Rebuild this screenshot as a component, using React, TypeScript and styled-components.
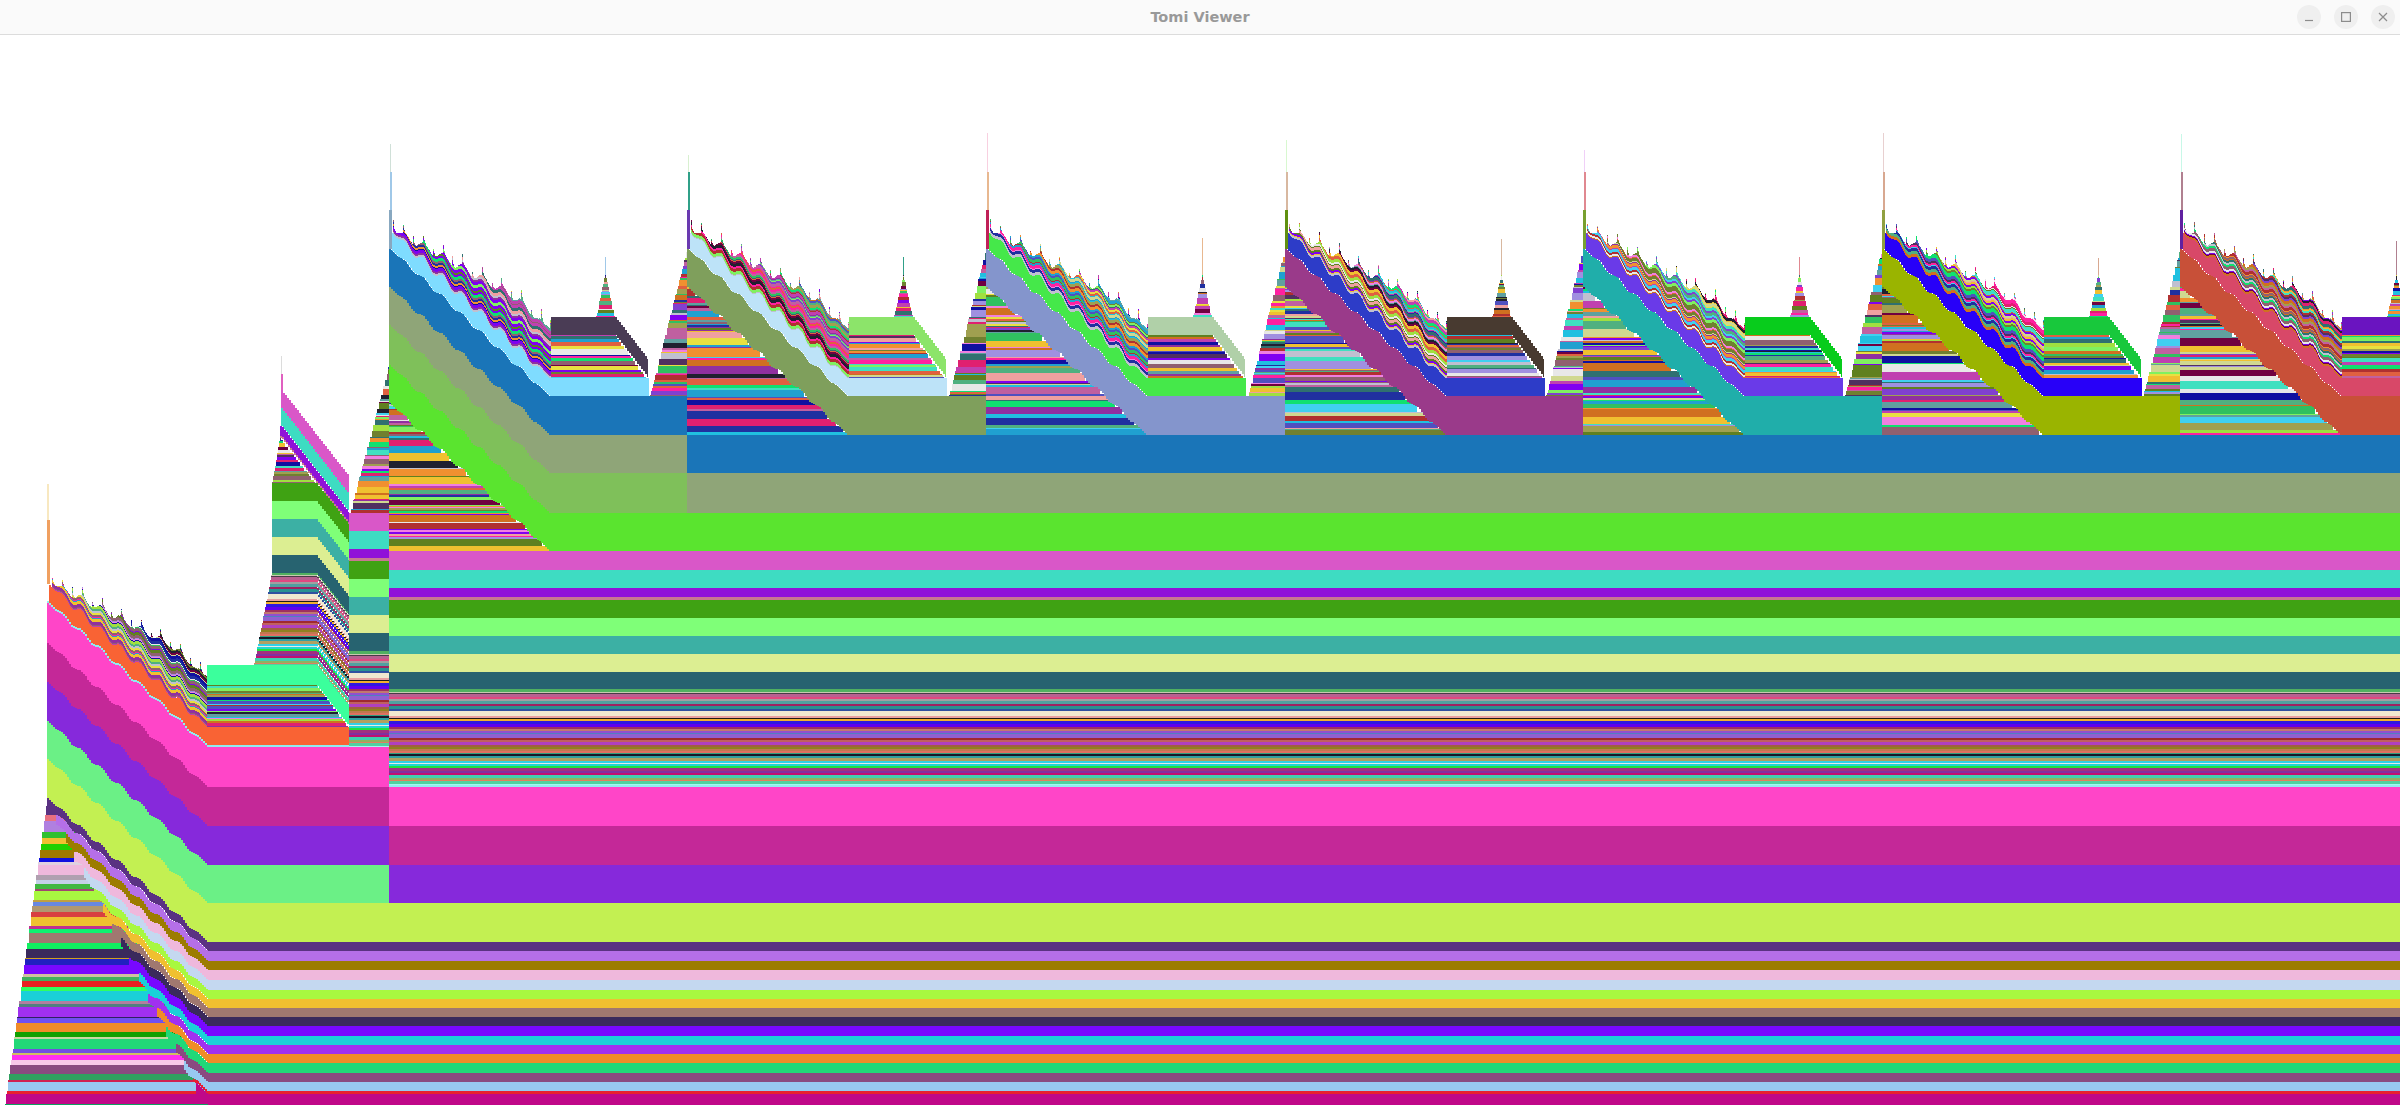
import React from 'react';
import styled, { createGlobalStyle } from 'styled-components';

const GlobalStyle = createGlobalStyle`
  html, body, #root { margin: 0; padding: 0; height: 100%; background: #fff; }
`;

const Window = styled.div`
  display: flex;
  flex-direction: column;
  height: 100vh;
  overflow: hidden;
`;

const TitleBar = styled.header`
  flex: 0 0 34px;
  display: flex;
  align-items: center;
  justify-content: flex-end;
  position: relative;
  padding-right: 5px;
  background: #fafafa;
  border-bottom: 1px solid #dcdcdc;
`;

const Title = styled.h1`
  position: absolute;
  left: 0;
  right: 0;
  margin: 0;
  text-align: center;
  font: bold 14.5px 'DejaVu Sans', sans-serif;
  color: #999;
`;

const WindowButtons = styled.div`
  display: flex;
  gap: 13px;
`;

const WindowButton = styled.button`
  width: 24px;
  height: 24px;
  padding: 0;
  border: 0;
  border-radius: 50%;
  background: #efefef;
  display: flex;
  align-items: center;
  justify-content: center;
  svg { display: block; stroke: #8c8c8c; stroke-width: 1.2; fill: none; }
`;

const ChartArea = styled.main`
  flex: 1;
  min-height: 0;
`;

const Chart = styled.svg`
  display: block;
  width: 100%;
  height: 100%;
  shape-rendering: crispEdges;
`;

type Op = { d: string; fill: string };
type Row = [string, number];

const VIVID = [
  '#e02070', '#30c060', '#8040d0', '#f0c030', '#20a0d0', '#a0e040', '#503060', '#e06040',
  '#40e0c0', '#c040b0', '#708030', '#2030a0', '#f080e0', '#10e070', '#906070', '#c0c0d0',
  '#d07020', '#60a0a0', '#700040', '#80f060', '#e8e040', '#5050c0', '#202030', '#a090e0',
  '#20c0e0', '#b03030', '#50b080', '#f0a0a0', '#9030a0', '#d0d890', '#1010a0', '#ff20a0',
  '#608020', '#40d0f0', '#e8e8e8', '#a0a050', '#c060a0', '#307070', '#8000f0', '#f09030',
];

const MID: Row[] = [
  ['#50b060', 3], ['#c8c8b0', 1], ['#483c48', 1], ['#b86090', 3], ['#e04880', 2], ['#a0a0a0', 2],
  ['#50a0a0', 3], ['#a02060', 2], ['#2a9090', 3], ['#3050a0', 2], ['#f0e8d0', 5], ['#e8a0a0', 2],
  ['#1a1a1a', 1], ['#f0b030', 2], ['#3018e0', 3], ['#6000f0', 3], ['#a03060', 2], ['#c07870', 2],
  ['#9050d0', 2], ['#5080c0', 1], ['#9060d0', 4], ['#a02830', 2], ['#c06060', 2], ['#b040c0', 3],
  ['#a06040', 2], ['#908020', 2], ['#c07850', 2], ['#e07060', 2], ['#30a080', 1], ['#181828', 2],
  ['#30a0a0', 2], ['#b0a060', 3], ['#30d0e8', 2], ['#e8e8e8', 1], ['#20d8d0', 2], ['#20e040', 2],
  ['#a03080', 3], ['#8030a0', 2], ['#c01070', 2], ['#40d0b0', 3], ['#90b060', 2], ['#e08060', 1],
  ['#50d0a0', 3], ['#a0f8f0', 1],
];

const LOW_TRIANGLE: [number, number, string][] = [
  [798, 806, '#e070a0'], [806, 815, '#5a3282'], [815, 821, '#e87080'], [821, 832, '#b080e0'],
  [832, 838, '#30c030'], [838, 844, '#f0c030'], [844, 850, '#20d000'], [850, 858, '#a07800'],
  [858, 862, '#1010e0'], [862, 865, '#e0d0e0'], [865, 875, '#efb8dc'], [875, 880, '#b0a0b0'],
  [880, 884, '#c4d0e8'], [884, 889, '#40b840'], [889, 891, '#a04870'], [891, 900, '#a8f840'],
  [900, 902, '#c0a040'], [902, 906, '#6888e0'], [906, 912, '#b09870'], [912, 917, '#d84040'],
  [917, 926, '#f0c030'], [926, 929, '#c03090'], [929, 933, '#10f070'], [933, 943, '#a07870'],
  [943, 949, '#10f060'], [949, 958, '#3a2a5c'], [958, 959, '#d0a020'], [959, 965, '#2020c0'],
  [965, 974, '#7808ff'], [974, 977, '#d0c0a0'], [977, 981, '#40b060'], [981, 987, '#e82020'],
  [987, 991, '#30ff60'], [991, 1001, '#1ad0d8'], [1001, 1004, '#b080a0'], [1004, 1007, '#508080'],
  [1007, 1017, '#a030f0'], [1017, 1018, '#302060'], [1018, 1023, '#7050f0'], [1023, 1032, '#f08c28'],
  [1032, 1037, '#10a000'], [1037, 1039, '#c8d8a0'], [1039, 1049, '#22d878'], [1049, 1053, '#7050e0'],
  [1053, 1055, '#d0c060'], [1055, 1060, '#ff30f0'], [1060, 1065, '#f8c8e8'], [1065, 1074, '#8a4a80'],
  [1074, 1080, '#30a060'], [1080, 1082, '#d02050'], [1082, 1091, '#98c8f0'], [1091, 1094, '#e82030'],
  [1094, 1104, '#c00888'], [1104, 1105, '#10a060'],
];

const LOW_STACK: Row[] = [
  ['#5a3282', 9], ['#b56fe8', 10], ['#9c7c00', 9], ['#efb8dc', 10], ['#c4d8f0', 10], ['#a8f840', 9],
  ['#f0c030', 9], ['#a07870', 9], ['#3a2a5c', 9], ['#7808ff', 10], ['#1ad0d8', 9], ['#a030f0', 9],
  ['#f08c28', 9], ['#22d878', 10], ['#8a4a80', 9], ['#98c8f0', 9], ['#e82030', 3], ['#c00888', 11],
];

const UNITS = [
  { x0: 389, top: 144, spikeTop: 257, a: '#7fdcff', b: '#1a75b8', box: '#4a3c55', wide: '#88a8c0', mid: '#a0c8e8', pale: '#d0e0d8' },
  { x0: 687, top: 155, spikeTop: 257, a: '#bde3f8', b: '#7f9f5c', box: '#8ce46a', wide: '#6a3ab0', mid: '#30a088', pale: '#d8f0d0' },
  { x0: 986, top: 133, spikeTop: 238, a: '#45e84a', b: '#8495cc', box: '#b0d0a8', wide: '#c02058', mid: '#e8b890', pale: '#f8d0e0' },
  { x0: 1285, top: 140, spikeTop: 239, a: '#2d3cc8', b: '#9a3a8a', box: '#483a30', wide: '#609010', mid: '#d8b8a0', pale: '#d8f8d0' },
  { x0: 1583, top: 150, spikeTop: 257, a: '#6a3ae8', b: '#20aeaa', box: '#08cc1c', wide: '#78a030', mid: '#e08890', pale: '#f0d0f8' },
  { x0: 1882, top: 133, spikeTop: 258, a: '#2800f8', b: '#9ab400', box: '#18c83c', wide: '#90a040', mid: '#d8a890', pale: '#e8d0d0' },
  { x0: 2180, top: 134, spikeTop: 241, a: '#d84868', b: '#c85038', box: '#6a14c0', wide: '#6020a0', mid: '#b08090', pale: '#c8f8e8' },
];

const rng = (seed: number) => () => {
  seed = (seed * 1664525 + 1013904223) >>> 0;
  return seed / 4294967296;
};

const ops: Op[] = [];

const bar = (fill: string, y: number, h: number, x1: number, x2: number) => {
  const l = Math.round(x1);
  const r = Math.round(x2);
  if (r > l) ops.push({ fill, d: `M${l} ${y}H${r}V${y + h}H${l}Z` });
};

const stairY = (x: number, yFinal: number, a: number, b: number, shift: number, amp: number) => {
  const t = Math.max(0, Math.min(1, (x - a) / (b - a)));
  const fade = Math.min(1, t * 8, (1 - t) * 8);
  return Math.round(yFinal - shift * (1 - t) + amp * fade * Math.sin((2 * Math.PI * (x - a)) / 19.6));
};

const band = (
  fill: string, yFinal: number, h: number, a: number, b: number, shift: number,
  xs: number, xe: number, amp = 2, ampTop = amp,
) => {
  let top = '';
  let bottom = '';
  for (let x = xs; x < xe; x += 2) {
    const nx = Math.min(x + 2, xe);
    const yt = stairY(x, yFinal, a, b, shift, ampTop);
    const yb = stairY(x, yFinal, a, b, shift, amp) + h;
    top += `${top ? 'L' : 'M'}${x} ${yt}L${nx} ${yt}`;
    bottom = `L${nx} ${yb}L${x} ${yb}` + bottom;
  }
  ops.push({ fill, d: `${top}${bottom}Z` });
};

const stack = (rows: Row[], y0: number, draw: (fill: string, y: number, h: number) => void) => {
  let y = y0;
  for (const [fill, h] of rows) {
    draw(fill, y, h);
    y += h;
  }
};

const stripes = (
  seed: number, y0: number, y1: number,
  left: (y: number) => number, right: (y: number) => number, maxH = 7,
) => {
  const r = rng(seed);
  let y = y0;
  while (y < y1) {
    const big = r() > 0.55;
    const h = Math.min(y1 - y, big ? 3 + Math.floor(r() * (maxH - 2)) : 1 + Math.floor(r() * 2));
    bar(VIVID[Math.floor(r() * VIVID.length)], y, h, left(y), right(y));
    y += h;
  }
};

// sawtooth heap of thin slices sitting on the light band of each wave
const sawHeap = (seed: number, x0: number, x1: number, bandTop: (x: number) => number) => {
  const r = rng(seed);
  const layers: string[] = [];
  for (let i = 0; i < 90; i++) {
    const c = VIVID[Math.floor(r() * VIVID.length)];
    const n = 1 + Math.floor(r() * 3);
    for (let k = 0; k < n; k++) layers.push(c);
  }
  const paths = new Map<string, string>();
  for (let x = x0; x < x1; x++) {
    const t = (x - x0) / (x1 - x0);
    const phase = (x - x0) % 9.8;
    const spike = phase < 1 ? 6 + r() * 5 : phase < 2 ? 3 : phase < 3 ? 1 : 0;
    const group = ((x - x0) % 19.6) / 19.6;
    const height = Math.round(Math.min(50, 4 + 60 * t) * (0.95 + 0.05 * group) + spike);
    const base = bandTop(x);
    for (let d = 0; d < height; d++) {
      const c = layers[d % layers.length];
      paths.set(c, (paths.get(c) || '') + `M${x} ${base - d - 1}h1v1h-1Z`);
    }
  }
  paths.forEach((d, fill) => ops.push({ fill, d }));
};

const buildChart = () => {
  // first, lower wave: left triangle and the long rows under it
  const lowLeft = (y: number) => 47 - (y - 798) * 0.137;
  for (const [y0, y1, c] of LOW_TRIANGLE) {
    bar(c, y0, y1 - y0, lowLeft(y0), 47 + ((y0 - 798) / 307) * 160 + 14);
  }
  stack(LOW_STACK, 942, (fill, y, h) => {
    const start = Math.round(47 + ((y - 942) / 163) * 160);
    band(fill, y, h, 47, 207, 144, start, 2400);
  });

  // left spine
  bar('#f8e8c0', 484, 36, 47, 49);
  bar('#f0a060', 520, 64, 47, 50);

  const low = (fill: string, y: number, h: number, xe: number) => band(fill, y, h, 47, 207, 144, 47, xe);
  low('#c3f052', 903, 39, 2400);
  low('#6bf086', 865, 38, 389);
  low('#8629db', 826, 39, 389);
  low('#c42898', 787, 39, 389);
  low('#ff45c8', 747, 40, 389);
  low('#90ecf0', 745, 2, 389);
  band('#f96334', 727, 18, 47, 207, 144, 49, 349, 2, 3.5);
  sawHeap(11, 52, 207, (x) => stairY(x, 727, 47, 207, 144, 3.5));

  // mint box tower between the first and second wave
  stripes(23, 683, 727, () => 207, (y) => 316 + ((y - 683) / 44) * 33, 3);
  band('#3bff9c', 707, 20, 316, 349, 42, 207, 349, 0);
  bar('#f96334', 727, 18, 207, 349);

  const towerLeft = (y: number) => 272 - ((y - 572) * 18) / 93;
  stack(MID, 572, (fill, y, h) => {
    band(fill, y + 42, h, 316, 349, 42, Math.round(towerLeft(y)), 349, 0);
  });
  let rowY = 483;
  for (const c of ['#3fa213', '#7fff78', '#3cb0a4', '#dcee92', '#276370']) {
    band(c, rowY + 42, 18, 316, 349, 42, 272, 349, 0);
    rowY += 18;
  }
  band('#3bff9c', 707, 20, 316, 349, 42, 207, 349, 0);
  stripes(37, 438, 483, (y) => 280 - ((y - 438) * 8) / 45, (y) => 281 + (y - 438) / 1.28, 4);
  band('#d957c8', 477, 18, 281, 349, 87, 281, 349, 0);
  band('#3edcc2', 495, 18, 281, 349, 87, 281, 349, 0);
  band('#9012d8', 513, 10, 281, 349, 87, 280, 349, 0);
  band('#c87890', 523, 2, 281, 349, 87, 280, 349, 0);
  bar('#dcdcdc', 356, 18, 281, 282);
  bar('#e060c0', 374, 16, 281, 283);

  // column right before the big repeat
  stripes(41, 365, 513, (y) => 389 - ((y - 365) * 39) / 148, () => 390, 6);
  const MAIN: Row[] = [
    ['#d957c8', 18], ['#3edcc2', 18], ['#9012d8', 9], ['#c87890', 3], ['#3fa213', 18],
    ['#7fff78', 18], ['#3cb0a4', 18], ['#dcee92', 18], ['#276370', 18],
  ];
  stack(MAIN, 513, (fill, y, h) => bar(fill, y, h, 349, 389));
  stack(MID, 651, (fill, y, h) => bar(fill, y, h, 349, 389));

  // rows running under all the waves
  const MAIN_LONG: Row[] = [
    ['#d957c8', 19], ['#3edcc2', 18], ['#9012d8', 9], ['#c87890', 3], ['#3fa213', 18],
    ['#7fff78', 18], ['#3cb0a4', 18], ['#dcee92', 18], ['#276370', 18],
  ];
  stack(MAIN_LONG, 551, (fill, y, h) => bar(fill, y, h, 389, 2400));
  stack(MID, 689, (fill, y, h) => bar(fill, y, h, 389, 2400));
  bar('#90ecf0', 785, 2, 389, 2400);
  bar('#ff45c8', 787, 39, 389, 2400);
  bar('#c42898', 826, 39, 389, 2400);
  bar('#8629db', 865, 38, 389, 2400);
  bar('#1a75b8', 435, 38, 687, 2400);
  bar('#8fa578', 473, 40, 687, 2400);

  UNITS.forEach((u, i) => {
    const { x0 } = u;
    const next = i + 1 < UNITS.length ? UNITS[i + 1].x0 : 2478;
    const triTop = i === 0 ? 403 : 287;
    const triEnd = i === 0 ? 551 : 435;
    stripes(100 + i * 7, triTop, triEnd, () => x0, (y) => x0 + ((y - triTop) * 160) / 148 + 6, 8);

    if (i === 0) {
      band('#5ae42f', 513, 38, x0, x0 + 160, 148, x0, 2400);
      band('#7fc05a', 473, 40, x0, x0 + 160, 148, x0, 687);
      band('#8fa578', 435, 38, x0, x0 + 160, 148, x0, 687);
    }
    band(u.b, 396, 39, x0, x0 + 160, 148, x0, next);

    // small tower on the flat part of the wave
    const cx = x0 + 216;
    bar(u.mid, u.spikeTop, 275 - u.spikeTop, cx, cx + 1);
    stripes(200 + i * 7, 275, 317, (y) => cx - ((y - 275) / 42) * 9, (y) => cx + 1 + ((y - 275) / 42) * 9, 4);
    stripes(300 + i * 7, 335, 378, () => x0 + 162, (y) => x0 + 227 + ((y - 335) / 43) * 31, 4);
    band(u.box, 360, 18, x0 + 226, x0 + 259, 43, x0 + 162, x0 + 259, 0);

    band(u.a, 378, 18, x0, x0 + 160, 148, x0 + 3, x0 + 260, 2, 4);
    sawHeap(400 + i * 7, x0 + 4, x0 + 162, (x) => stairY(x, 378, x0, x0 + 160, 148, 4));

    // spine at the wave start
    bar(u.pale, u.top, 172 - u.top, x0 + 1, x0 + 2);
    bar(u.mid, 172, 38, x0 + 1, x0 + 3);
    bar(u.wide, 210, 39, x0, x0 + 3);

    // tower rising towards the next wave
    if (next < 2400) stripes(500 + i * 7, 248, 396, (y) => next - ((y - 248) * 37) / 148, () => next, 7);
  });
};

buildChart();

export default function App() {
  return (
    <Window>
      <GlobalStyle />
      <TitleBar>
        <Title>Tomi Viewer</Title>
        <WindowButtons>
          <WindowButton aria-label="Minimize">
            <svg width="10" height="10" viewBox="0 0 10 10"><path d="M1 8.5h8" /></svg>
          </WindowButton>
          <WindowButton aria-label="Maximize">
            <svg width="10" height="10" viewBox="0 0 10 10"><rect x="0.6" y="0.6" width="8.8" height="8.8" /></svg>
          </WindowButton>
          <WindowButton aria-label="Close">
            <svg width="10" height="10" viewBox="0 0 10 10"><path d="M1 1l8 8M9 1l-8 8" /></svg>
          </WindowButton>
        </WindowButtons>
      </TitleBar>
      <ChartArea>
        <Chart viewBox="0 35 2400 1080" preserveAspectRatio="none">
          {ops.map((op, i) => (
            <path key={i} d={op.d} fill={op.fill} />
          ))}
        </Chart>
      </ChartArea>
    </Window>
  );
}
